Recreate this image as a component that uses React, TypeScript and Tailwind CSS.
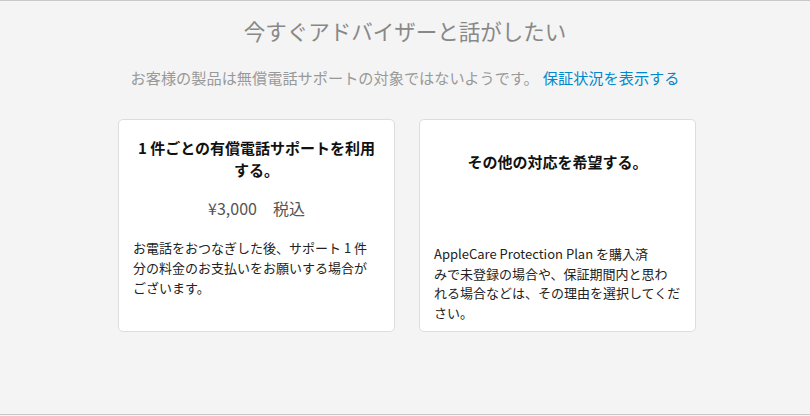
const jp = "font-['Noto_Sans_CJK_JP','Noto_Sans',sans-serif]";

function PaidCard() {
  return (
    <div className="w-[277px] h-[213px] bg-white border border-[#dddddd] rounded-[5px] px-[13px] pt-[17px] flex flex-col">
      <h3 className="text-center text-[15px] leading-[22px] font-bold text-[#111] whitespace-nowrap">
        1 件ごとの有償電話サポートを利用
        <br />
        する。
      </h3>
      <p className="mt-[16px] text-center text-[16px] leading-[22px] text-[#555]">
        ¥3,000　税込
      </p>
      <p className="mt-[19px] px-[1px] text-[13px] leading-[20px] text-[#222] whitespace-nowrap">
        お電話をおつなぎした後、サポート 1 件
        <br />
        分の料金のお支払いをお願いする場合が
        <br />
        ございます。
      </p>
    </div>
  );
}

function OtherCard() {
  return (
    <div className="w-[277px] h-[213px] bg-white border border-[#dddddd] rounded-[5px] px-[13px] pt-[31px] flex flex-col">
      <h3 className="text-center text-[15px] leading-[22px] font-bold text-[#111]">
        その他の対応を希望する。
      </h3>
      <p className="mt-[71px] px-[1px] text-[13px] leading-[19.5px] text-[#222] whitespace-nowrap">
        AppleCare Protection Plan を購入済
        <br />
        みで未登録の場合や、保証期間内と思わ
        <br />
        れる場合などは、その理由を選択してくだ
        <br />
        さい。
      </p>
    </div>
  );
}

export default function App() {
  return (
    <div className={`w-full h-[416px] bg-[#f4f4f4] ${jp}`}>
      <div className="h-[415px] border-t border-b border-[#c8c8c8] flex flex-col items-center">
        <h1 className="mt-[15px] text-[21.5px] leading-[30px] text-[#888888]">
          今すぐアドバイザーと話がしたい
        </h1>
        <p className="mt-[20px] text-[15.2px] leading-[22px] text-[#999999]">
          お客様の製品は無償電話サポートの対象ではないようです。
          <a href="#" className="text-[#0088cc] ml-[4px]">
            保証状況を表示する
          </a>
        </p>
        <div className="mt-[31px] pl-[4px] flex gap-[24px]">
          <PaidCard />
          <OtherCard />
        </div>
      </div>
    </div>
  );
}
